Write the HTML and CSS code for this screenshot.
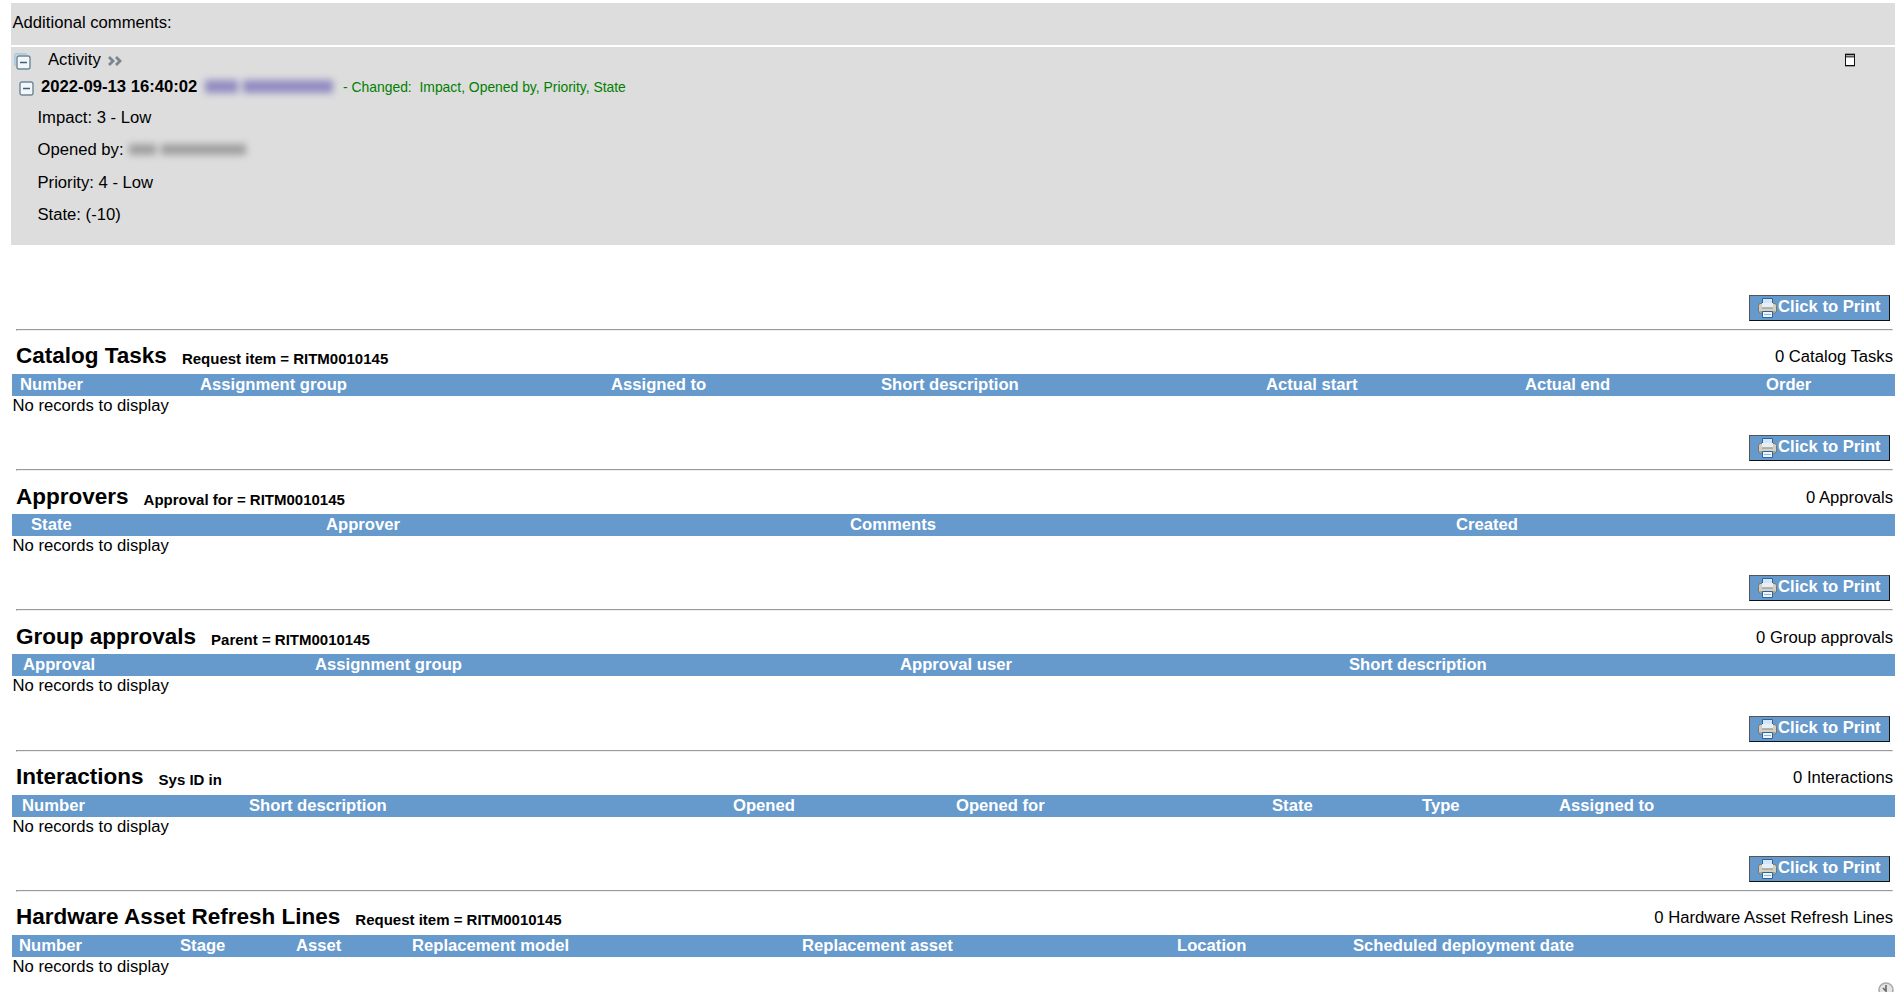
FILE: index.html
```
<!DOCTYPE html>
<html lang="en">

<head>
    <meta charset="UTF-8">
    <meta name="viewport" content="width=device-width, initial-scale=1.0">
    <title>RITM0010145</title>
    <link rel="stylesheet" href="styles.css">
</head>

<body>
<svg class="defs" width="0" height="0">
    <symbol id="printer" viewBox="0 0 19 20">
        <path d="M4.5 .5h10v7h-10z" fill="#d3e6f8" stroke="#2c62a0"/>
        <rect x=".5" y="5.5" width="18" height="9.5" rx="2" fill="#d2d0c2" stroke="#77766c"/>
        <path d="M4 5h11v4.5H4z" fill="#e6eef6"/>
        <path d="M4 10h11" stroke="#8d8c80"/>
        <path d="M1.5 13.5h16" stroke="#a3a295"/>
        <path d="M4.5 13.5h10v6h-10z" fill="#edf5fd" stroke="#2c62a0"/>
        <path d="M6 16.5h7" stroke="#8fb4da"/>
    </symbol>
</svg>
<div class="comments">Additional comments:</div>
<div class="activity">
    <div class="activity-head">
        <svg class="toggle-all" width="17" height="17" viewBox="0 0 17 17">
            <path d="M.9 13V2.4Q.9.9 2.4.9H13" fill="none" stroke="#a9cbe0" stroke-width="1.8"/>
            <rect x="3" y="3" width="13" height="13" rx="2" fill="#f4f7f9" stroke="#6c8798" stroke-width="1.4"/>
            <path d="M6 9.5h7" stroke="#3f6079" stroke-width="1.5"/>
        </svg>
        <span class="label">Activity</span>
        <svg class="more" width="14" height="10" viewBox="0 0 14 10">
            <path d="M1 1l4 4-4 4M8 1l4 4-4 4" fill="none" stroke="#7b858f" stroke-width="2.8"/>
        </svg>
        <svg class="window" width="10" height="14" viewBox="0 0 10 14">
            <path d="M0 0h10v14H0z" fill="#999"/>
            <rect x=".5" y="1.5" width="9" height="11" fill="#fff" stroke="#111"/>
            <path d="M1 3.5h8" stroke="#555" stroke-width="2"/>
        </svg>
    </div>
    <div class="entry-head">
        <svg class="toggle" width="15" height="15" viewBox="0 0 15 15">
            <rect x="1" y="1" width="13" height="13" rx="2" fill="#f4f7f9" stroke="#6c8798" stroke-width="1.4"/>
            <path d="M4 7.5h7" stroke="#3f6079" stroke-width="1.5"/>
        </svg>
        <b>2022-09-13 16:40:02</b>
        <span class="smudge link"><i></i><i></i></span>
        <span class="changed">- Changed:&nbsp; Impact, Opened by, Priority, State</span>
    </div>
    <div class="field">Impact: 3 - Low</div>
    <div class="field">Opened by:<span class="smudge"><i></i><i></i></span></div>
    <div class="field">Priority: 4 - Low</div>
    <div class="field">State: (-10)</div>
</div>

<div class="list">
    <div class="print"><button><svg><use href="#printer"/></svg>Click to Print</button></div>
    <hr>
    <div class="title"><h2>Catalog Tasks</h2><b>Request item = RITM0010145</b><span>0 Catalog Tasks</span></div>
    <div class="head tasks">
        <span>Number</span><span>Assignment group</span><span>Assigned to</span><span>Short description</span><span>Actual start</span><span>Actual end</span><span>Order</span>
    </div>
    <div class="empty">No records to display</div>
</div>

<div class="list">
    <div class="print"><button><svg><use href="#printer"/></svg>Click to Print</button></div>
    <hr>
    <div class="title"><h2>Approvers</h2><b>Approval for = RITM0010145</b><span>0 Approvals</span></div>
    <div class="head approvers">
        <span>State</span><span>Approver</span><span>Comments</span><span>Created</span>
    </div>
    <div class="empty">No records to display</div>
</div>

<div class="list">
    <div class="print"><button><svg><use href="#printer"/></svg>Click to Print</button></div>
    <hr>
    <div class="title"><h2>Group approvals</h2><b>Parent = RITM0010145</b><span>0 Group approvals</span></div>
    <div class="head groups">
        <span>Approval</span><span>Assignment group</span><span>Approval user</span><span>Short description</span>
    </div>
    <div class="empty">No records to display</div>
</div>

<div class="list">
    <div class="print"><button><svg><use href="#printer"/></svg>Click to Print</button></div>
    <hr>
    <div class="title"><h2>Interactions</h2><b>Sys ID in</b><span>0 Interactions</span></div>
    <div class="head interactions">
        <span>Number</span><span>Short description</span><span>Opened</span><span>Opened for</span><span>State</span><span>Type</span><span>Assigned to</span>
    </div>
    <div class="empty">No records to display</div>
</div>

<div class="list">
    <div class="print"><button><svg><use href="#printer"/></svg>Click to Print</button></div>
    <hr>
    <div class="title"><h2>Hardware Asset Refresh Lines</h2><b>Request item = RITM0010145</b><span>0 Hardware Asset Refresh Lines</span></div>
    <div class="head hardware">
        <span>Number</span><span>Stage</span><span>Asset</span><span>Replacement model</span><span>Replacement asset</span><span>Location</span><span>Scheduled deployment date</span>
    </div>
    <div class="empty">No records to display</div>
</div>

<svg class="clock" width="16" height="16" viewBox="0 0 16 16">
    <circle cx="8" cy="8" r="7" fill="#e4e4e4" stroke="#aaa" stroke-width="1.6"/>
    <path d="M8 3v6L5 6" fill="none" stroke="#666" stroke-width="1.6"/>
</svg>
</body>

</html>
```
FILE: styles.css
```
html,
body {
    height: 100%;
    overflow: hidden;
}

body {
    margin: 0;
    padding: 3px 0 0 11px;
    box-sizing: border-box;
    font-family: Arial, "Liberation Sans", sans-serif;
    font-size: 16.65px;
    line-height: 20px;
    color: #000;
    background-color: #fff;
}

.defs {
    position: absolute;
}

.comments {
    height: 42px;
    padding: 10px 0 0 1.5px;
    box-sizing: border-box;
    background-color: #ddd;
}

.activity {
    height: 198px;
    margin: 2px 0 43px;
    background-color: #ddd;
}

.activity-head,
.entry-head {
    display: flex;
    align-items: flex-start;
}

.activity-head {
    height: 27px;
    padding: 3px 40px 0 3px;
    box-sizing: border-box;
}

.toggle-all {
    margin-top: 3px;
}

.label {
    margin-left: 17px;
}

.more {
    margin: 6px 0 0 7px;
}

.window {
    margin: 3px 0 0 auto;
}

.entry-head {
    height: 34px;
    padding-left: 8px;
}

.toggle {
    margin: 7px 7px 0 0;
}

.entry-head b {
    width: 164px;
    padding-top: 3px;
    white-space: nowrap;
}

.smudge {
    display: inline-flex;
    gap: 5px;
    filter: blur(3.5px);
    opacity: .6;
}

.smudge i {
    width: 27px;
    height: 11px;
    background-color: #777;
}

.smudge i + i {
    width: 85px;
}

.smudge.link {
    width: 132px;
    margin: 6px 6px 0 0;
}

.smudge.link i {
    height: 13px;
    background-color: #5f58b0;
}

.smudge.link i:first-child {
    width: 33px;
}

.smudge.link i + i {
    width: 90px;
}

.changed {
    padding-top: 3px;
    font-size: 13.9px;
    white-space: pre;
    color: #008000;
}

.field {
    height: 32.3px;
    padding-left: 26.5px;
}

.field .smudge {
    margin-left: 5px;
}

.list {
    height: 140.2px;
}

.print {
    display: flex;
    justify-content: flex-end;
    height: 41px;
    padding: 7px 5px 0 0;
    box-sizing: border-box;
}

button {
    display: flex;
    width: 141px;
    height: 26px;
    padding: 0 0 0 8px;
    box-sizing: border-box;
    border: 1px solid #111;
    border-top-color: #555;
    border-left-color: #555;
    font: bold 16.65px/21px Arial, "Liberation Sans", sans-serif;
    color: #fff;
    background-color: #69c;
    white-space: nowrap;
}

button svg {
    width: 19px;
    height: 20px;
    margin: 2px 1px 0 0;
    flex: none;
}

hr {
    height: 2px;
    margin: 0 2px 0 5px;
    border: 1px solid;
    border-color: #9a9a9a #eee #eee #9a9a9a;
    box-sizing: border-box;
}

.title {
    display: flex;
    align-items: flex-start;
    height: 43px;
    padding: 12.4px 2px 0 5px;
    box-sizing: border-box;
}

h2 {
    margin: 0 15px 0 0;
    font-size: 22.5px;
    line-height: 26px;
}

.title b {
    padding-top: 6px;
    font-size: 15px;
}

.title span {
    margin-left: auto;
    padding-top: 4px;
}

.head {
    display: grid;
    height: 22px;
    padding-left: 1px;
    color: #fff;
    background-color: #69c;
    background-clip: content-box;
    font-weight: bold;
    line-height: 21px;
    white-space: nowrap;
}

.tasks {
    grid-template-columns: 188px 411px 270px 385px 259px 241px 1fr;
}

.tasks span:first-child {
    padding-left: 8px;
}

.approvers {
    grid-template-columns: 314px 524px 606px 1fr;
}

.approvers span:first-child {
    padding-left: 19px;
}

.groups {
    grid-template-columns: 303px 585px 449px 1fr;
}

.groups span:first-child {
    padding-left: 11px;
}

.interactions {
    grid-template-columns: 237px 484px 223px 316px 150px 137px 1fr;
}

.interactions span:first-child {
    padding-left: 10px;
}

.hardware {
    grid-template-columns: 168px 116px 116px 390px 375px 176px 1fr;
}

.hardware span:first-child {
    padding-left: 7px;
}

.empty {
    padding-left: 1.5px;
    line-height: 20px;
}

.clock {
    position: absolute;
    right: 1px;
    bottom: -6px;
}
```
